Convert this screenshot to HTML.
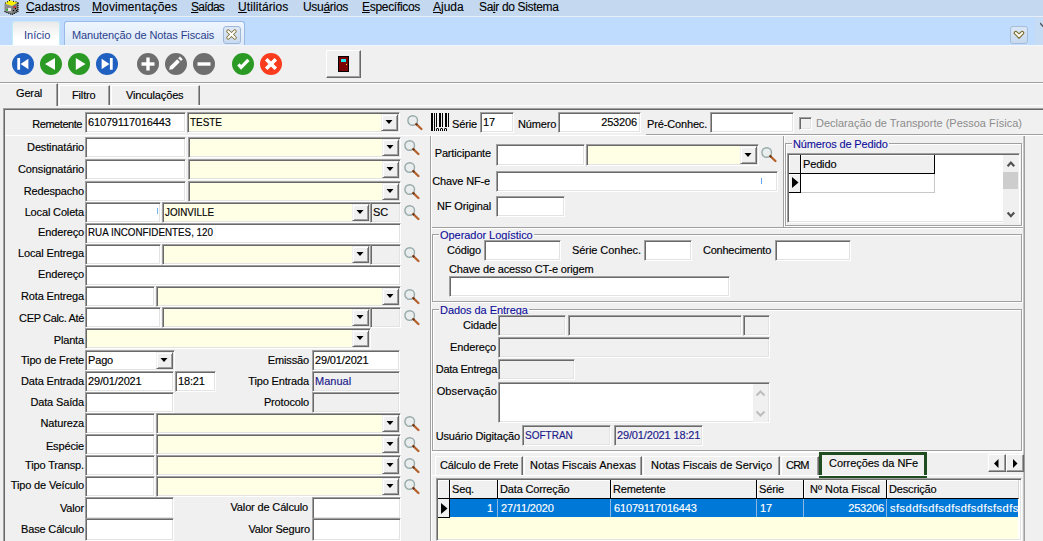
<!DOCTYPE html>
<html><head><meta charset="utf-8"><style>
html,body{margin:0;padding:0;width:1043px;height:541px;overflow:hidden;background:#f0f0f0}
body>div,body>svg{position:absolute}
.t,.m,.tb,.t11,.gt{position:absolute;white-space:nowrap;font-family:"Liberation Sans",sans-serif;color:#000}
.t,.t11{font-size:11px;line-height:13px;letter-spacing:-0.15px;-webkit-text-stroke:0.15px currentColor}
.m{font-size:12px;line-height:14px;color:#000;letter-spacing:0;-webkit-text-stroke:0.1px #000}
.tb{font-size:12px;line-height:14px;letter-spacing:-0.2px}
.gt{font-size:11px;line-height:13px;color:#0e0e9a;background:#f0f0f0;padding:0 1px;letter-spacing:-0.05px;-webkit-text-stroke:0.1px currentColor}
.ed{position:absolute;box-sizing:border-box;border-style:solid;border-width:1px;border-color:#a0a0a0 #fff #fff #a0a0a0;box-shadow:inset 1px 1px 0 #696969,inset -1px -1px 0 #e3e3e3}
.btn{position:absolute;box-sizing:border-box;background:#f0f0f0;border-style:solid;border-width:1px;border-color:#f0f0f0 #696969 #696969 #f0f0f0;box-shadow:inset 1px 1px 0 #fff,inset -1px -1px 0 #a0a0a0}
.tri{position:absolute;width:0;height:0;border-left:4px solid transparent;border-right:4px solid transparent;border-top:4px solid #000}
.grp{position:absolute;box-sizing:border-box;border:1px solid #a0a0a0;box-shadow:1px 1px 0 #fff, inset 1px 1px 0 #fff}
</style></head><body>
<div style="left:0px;top:0px;width:1043px;height:16px;background:#c4d9ef"></div>
<div style="left:0px;top:16px;width:1043px;height:1px;background:#e8eef6"></div>
<svg style="left:3px;top:0px" width="17" height="16" viewBox="0 0 17 16">
<polygon points="1.5,3.5 6.5,0.3 15,2.5 9,6" fill="#f8f000"/>
<polygon points="1.5,3.5 9,6 9,14.5 1.5,11.5" fill="#8c8c8c"/>
<polygon points="9,6 15,2.5 15,11.5 9,14.5" fill="#787878"/>
<rect x="2" y="2.5" width="1" height="1" fill="#000"/><rect x="4" y="1.3" width="1" height="1" fill="#000"/><rect x="6" y="0" width="1" height="1" fill="#000"/><rect x="10" y="0.8" width="1" height="1" fill="#000"/><rect x="12.5" y="1.4" width="1" height="1" fill="#000"/><rect x="14.5" y="2.2" width="1" height="1" fill="#000"/>
<path d="M1.5,11.5 L9,14.5 L15,11.5 L15,3" fill="none" stroke="#000" stroke-width="1.1" stroke-dasharray="1.2,0.8"/>
<rect x="3.5" y="9" width="1.5" height="1.5" fill="#1c1"/><rect x="10.5" y="6.5" width="2.5" height="1.2" fill="#f11"/>
<rect x="5" y="8" width="3" height="3" fill="#e8e8e8"/><rect x="12" y="8" width="1" height="1" fill="#000"/><rect x="10" y="10" width="1" height="1" fill="#000"/><rect x="13" y="10" width="1" height="1" fill="#000"/>
</svg>
<div class="m" style="top:0px;letter-spacing:-0.1px;left:26px;"><u>C</u>adastros</div>
<div class="m" style="top:0px;letter-spacing:0.1px;left:92px;"><u>M</u>ovimentações</div>
<div class="m" style="top:0px;letter-spacing:-0.7px;left:191px;"><u>S</u>aídas</div>
<div class="m" style="top:0px;letter-spacing:0.1px;left:238px;"><u>U</u>tilitários</div>
<div class="m" style="top:0px;letter-spacing:-0.3px;left:303px;">Usu<u>á</u>rios</div>
<div class="m" style="top:0px;letter-spacing:-0.3px;left:362px;"><u>E</u>specíficos</div>
<div class="m" style="top:0px;letter-spacing:0px;left:433px;"><u>A</u>juda</div>
<div class="m" style="top:0px;letter-spacing:-0.35px;left:479px;">Sa<u>i</u>r do Sistema</div>
<div style="left:0px;top:17px;width:1043px;height:28px;background:#bfdbfe"></div>
<div style="left:0px;top:45px;width:1043px;height:1px;background:#f4f8fc"></div>
<div style="left:12px;top:21px;width:48px;height:24px;background:linear-gradient(#eaeaea,#ffffff 70%);border:1px solid #d0e6f4;border-left-color:#bfeefa;border-right-color:#bfeefa;border-bottom:none;border-radius:3px 3px 0 0;box-sizing:border-box"></div>
<div class="tb" style="top:28px;letter-spacing:0px;left:24px;color:#2b3f8e;font-size:11px">Início</div>
<div style="left:64px;top:21px;width:181px;height:24px;background:linear-gradient(#eef5fd,#dde9f8);border:1px solid #98b9e6;border-bottom:none;border-radius:3px 3px 0 0;box-sizing:border-box"></div>
<div class="tb" style="top:28px;letter-spacing:-0.1px;left:72px;color:#2b3f8e;font-size:11px">Manutenção de Notas Fiscais</div>
<div style="left:223px;top:26px;width:18px;height:18px;background:linear-gradient(#dde8f6,#c9daf0);border:1px solid #9fb6d6;border-radius:3px;box-sizing:border-box"></div>
<svg style="left:226px;top:29px" width="11" height="11" viewBox="0 0 11 11"><path d="M2.2,2.2 L8.8,8.8 M8.8,2.2 L2.2,8.8" stroke="#7a6a2a" stroke-width="3.6" stroke-linecap="round"/><path d="M2.2,2.2 L8.8,8.8 M8.8,2.2 L2.2,8.8" stroke="#ffffff" stroke-width="2" stroke-linecap="round"/></svg>
<div style="left:1010px;top:26px;width:18px;height:18px;background:linear-gradient(#dbe7f6,#c7d9f0);border:1px solid #a6bcd9;border-radius:3px;box-sizing:border-box"></div>
<div style="left:1035px;top:17px;width:8px;height:28px;background:#c6dcf4"></div>
<svg style="left:1013px;top:29px" width="12" height="12" viewBox="0 0 12 12"><path d="M1.2,4.3 Q1.2,2.3 3.2,2.3 L6,4.8 L8.8,2.3 Q10.8,2.3 10.8,4.3 L6,9.3 Z" fill="#fffef6" stroke="#7a6a2a" stroke-width="1.1" stroke-linejoin="round"/></svg>
<svg style="left:1040px;top:22px" width="3" height="6" viewBox="0 0 3 6"><path d="M0,1 L2.5,4 L5,1" fill="none" stroke="#555" stroke-width="1.3"/></svg>
<div style="left:0px;top:46px;width:1043px;height:36px;background:#f0f0f0"></div>
<div style="left:0px;top:82px;width:1043px;height:1px;background:#a0a0a0"></div>
<div style="left:0px;top:83px;width:1043px;height:1px;background:#ffffff"></div>
<svg style="left:12px;top:53px" width="22" height="22" viewBox="0 0 22 22"><circle cx="11" cy="11" r="11" fill="#1f60c0"/><rect x="5.3" y="5" width="2.8" height="11.7" fill="#fff"/><polygon points="8.6,11 16.4,5.8 16.4,16.2" fill="#fff"/></svg>
<svg style="left:40px;top:53px" width="22" height="22" viewBox="0 0 22 22"><circle cx="11" cy="11" r="11" fill="#2b9a25"/><polygon points="5,11 15,5 15,17" fill="#fff"/></svg>
<svg style="left:68px;top:53px" width="22" height="22" viewBox="0 0 22 22"><circle cx="11" cy="11" r="11" fill="#2b9a25"/><polygon points="17.5,11 7.8,5 7.8,17" fill="#fff"/></svg>
<svg style="left:96px;top:53px" width="22" height="22" viewBox="0 0 22 22"><circle cx="11" cy="11" r="11" fill="#1f60c0"/><rect x="13.9" y="5" width="2.8" height="11.7" fill="#fff"/><polygon points="13.4,11 5.6,5.8 5.6,16.2" fill="#fff"/></svg>
<svg style="left:137px;top:53px" width="22" height="22" viewBox="0 0 22 22"><circle cx="11" cy="11" r="11" fill="#6e6e6e"/><rect x="4.5" y="9.3" width="13" height="3.4" fill="#fff"/><rect x="9.3" y="4.5" width="3.4" height="13" fill="#fff"/></svg>
<svg style="left:165px;top:53px" width="22" height="22" viewBox="0 0 22 22"><circle cx="11" cy="11" r="11" fill="#6e6e6e"/><path d="M4.2,16.8 L4.9,13.6 L12.2,6.3 L14.9,9 L7.6,16.3 Z" fill="#fff"/><path d="M13.2,5.3 L15,3.6 L17.7,6.3 L16,8 Z" fill="#fff"/></svg>
<svg style="left:193px;top:53px" width="22" height="22" viewBox="0 0 22 22"><circle cx="11" cy="11" r="11" fill="#6e6e6e"/><rect x="4.5" y="9.3" width="13" height="3.4" fill="#fff"/></svg>
<svg style="left:232px;top:53px" width="22" height="22" viewBox="0 0 22 22"><circle cx="11" cy="11" r="11" fill="#2b9a25"/><path d="M6.4,11.4 L9.1,14.3 L16.4,6.9" fill="none" stroke="#fff" stroke-width="3.3"/></svg>
<svg style="left:260px;top:53px" width="22" height="22" viewBox="0 0 22 22"><circle cx="11" cy="11" r="11" fill="#fa3c1e"/><path d="M6.2,6.2 L15.8,15.8 M15.8,6.2 L6.2,15.8" stroke="#fff" stroke-width="3.6"/></svg>
<div style="left:326px;top:50px;width:35px;height:28px;background:#f0f0f0;border-top:1px solid #fff;border-left:1px solid #fff;border-right:1px solid #696969;border-bottom:1px solid #696969;box-shadow:inset -1px -1px 0 #a0a0a0;box-sizing:border-box"></div>
<div style="left:338px;top:56px;width:11px;height:16px;background:#7a0000;border:1px solid #000;box-sizing:border-box"></div>
<div style="left:341px;top:59px;width:5px;height:3px;background:#22e8f0"></div>
<div style="left:346px;top:64px;width:1px;height:1px;background:#ffe000"></div>
<div style="left:0px;top:84px;width:1043px;height:24px;background:#f0f0f0"></div>
<div style="left:0px;top:83px;width:58px;height:23px;background:#f0f0f0;border-top:1px solid #fff;border-right:1px solid #696969;box-shadow:inset -1px 0 0 #a0a0a0;box-sizing:border-box"></div>
<div class="t11" style="top:87px;left:16px;">Geral</div>
<div style="left:59px;top:85px;width:51px;height:21px;background:#f0f0f0;border-top:1px solid #fff;border-left:1px solid #fff;border-right:1px solid #696969;box-shadow:inset -1px 0 0 #a0a0a0;box-sizing:border-box"></div>
<div class="t11" style="top:89px;left:72px;">Filtro</div>
<div style="left:111px;top:85px;width:89px;height:21px;background:#f0f0f0;border-top:1px solid #fff;border-left:1px solid #fff;border-right:1px solid #696969;box-shadow:inset -1px 0 0 #a0a0a0;box-sizing:border-box"></div>
<div class="t11" style="top:89px;left:126px;">Vinculações</div>
<div style="left:58px;top:105px;width:985px;height:1px;background:#fff"></div>
<div style="left:3px;top:108px;width:1040px;height:433px;background:#f0f0f0"></div>
<div style="left:3px;top:108px;width:1040px;height:1px;background:#a0a0a0"></div>
<div style="left:4px;top:109px;width:1039px;height:1px;background:#696969"></div>
<div style="left:3px;top:108px;width:1px;height:433px;background:#a0a0a0"></div>
<div style="left:4px;top:109px;width:1px;height:432px;background:#696969"></div>
<div style="left:646px;top:134px;width:397px;height:1px;background:#a0a0a0"></div>
<div style="left:5px;top:135px;width:1038px;height:1px;background:#ffffff"></div>
<div style="left:430px;top:136px;width:1px;height:405px;background:#a0a0a0"></div>
<div style="left:431px;top:136px;width:1px;height:405px;background:#ffffff"></div>
<div style="left:1023px;top:136px;width:1px;height:405px;background:#c4c4c4"></div>
<div style="left:1024px;top:136px;width:1px;height:405px;background:#a0a0a0"></div>
<div class="t" style="top:118px;letter-spacing:-0.45px;left:-218px;width:300px;text-align:right;">Remetente</div>
<div class="ed" style="left:85px;top:112px;width:101px;height:21px;background:#fff"></div>
<div class="t" style="top:116px;left:88px;">61079117016443</div>
<div class="ed" style="left:187px;top:112px;width:213px;height:21px;background:#ffffe6"></div>
<div class="t" style="top:116px;letter-spacing:0px;left:190px;color:#000;transform:scaleX(0.9);transform-origin:0 0;">TESTE</div>
<div class="btn" style="left:381px;top:114px;width:17px;height:17px"></div>
<svg style="left:385px;top:120px" width="8" height="5" viewBox="0 0 8 5"><polygon points="0.5,0 7.5,0 4,4" fill="#000"/></svg>
<svg style="left:407px;top:115px" width="16" height="16" viewBox="0 0 16 16"><circle cx="5.7" cy="5.5" r="4.8" fill="#e9eded" stroke="#97a9a9" stroke-width="1.4"/><line x1="9.2" y1="9.0" x2="14.4" y2="14.0" stroke="#b4602a" stroke-width="2.3" stroke-linecap="round"/><line x1="9.0" y1="8.8" x2="10.2" y2="10.0" stroke="#5a3520" stroke-width="2.3"/></svg>
<svg style="left:431px;top:113px" width="19" height="18" viewBox="0 0 19 18"><g fill="#000"><rect x="0" y="0" width="2" height="18"/><rect x="3" y="0" width="1" height="18"/><rect x="5" y="0" width="1" height="14"/><rect x="8" y="0" width="2" height="14"/><rect x="11" y="0" width="1" height="14"/><rect x="14" y="0" width="2" height="14"/><rect x="17" y="0" width="1" height="14"/><rect x="5.5" y="15" width="2" height="1"/><rect x="5" y="16" width="1" height="2"/><rect x="7" y="16" width="1" height="2"/><rect x="9.5" y="15" width="2" height="1"/><rect x="9" y="16" width="1" height="2"/><rect x="11" y="16" width="1" height="2"/><rect x="13.5" y="15" width="2" height="1"/><rect x="13" y="16" width="1" height="2"/><rect x="15" y="16" width="1" height="2"/></g></svg>
<div class="t" style="top:118px;left:452px;">Série</div>
<div class="ed" style="left:480px;top:112px;width:34px;height:21px;background:#fff"></div>
<div class="t" style="top:116px;left:483px;">17</div>
<div class="t" style="top:118px;left:518px;">Número</div>
<div class="ed" style="left:558px;top:112px;width:83px;height:21px;background:#fff"></div>
<div class="t" style="top:116px;left:337px;width:300px;text-align:right;">253206</div>
<div class="t" style="top:118px;left:647px;">Pré-Conhec.</div>
<div class="ed" style="left:710px;top:112px;width:84px;height:21px;background:#fff"></div>
<div class="ed" style="left:799px;top:117px;width:13px;height:13px;background:#f0f0f0"></div>
<div class="t" style="top:117px;left:816px;color:#8c8c8c;letter-spacing:0;-webkit-text-stroke:0">Declaração de Transporte (Pessoa Física)</div>
<div class="t" style="top:141px;left:-216px;width:300px;text-align:right;">Destinatário</div>
<div class="ed" style="left:85px;top:137px;width:101px;height:21px;background:#fff"></div>
<div class="ed" style="left:188px;top:137px;width:213px;height:21px;background:#ffffe6"></div>
<div class="btn" style="left:382px;top:139px;width:17px;height:17px"></div>
<svg style="left:386px;top:145px" width="8" height="5" viewBox="0 0 8 5"><polygon points="0.5,0 7.5,0 4,4" fill="#000"/></svg>
<svg style="left:404px;top:140px" width="16" height="16" viewBox="0 0 16 16"><circle cx="5.7" cy="5.5" r="4.8" fill="#e9eded" stroke="#97a9a9" stroke-width="1.4"/><line x1="9.2" y1="9.0" x2="14.4" y2="14.0" stroke="#b4602a" stroke-width="2.3" stroke-linecap="round"/><line x1="9.0" y1="8.8" x2="10.2" y2="10.0" stroke="#5a3520" stroke-width="2.3"/></svg>
<div class="t" style="top:163px;left:-216px;width:300px;text-align:right;">Consignatário</div>
<div class="ed" style="left:85px;top:159px;width:101px;height:21px;background:#fff"></div>
<div class="ed" style="left:188px;top:159px;width:213px;height:21px;background:#ffffe6"></div>
<div class="btn" style="left:382px;top:161px;width:17px;height:17px"></div>
<svg style="left:386px;top:167px" width="8" height="5" viewBox="0 0 8 5"><polygon points="0.5,0 7.5,0 4,4" fill="#000"/></svg>
<svg style="left:404px;top:162px" width="16" height="16" viewBox="0 0 16 16"><circle cx="5.7" cy="5.5" r="4.8" fill="#e9eded" stroke="#97a9a9" stroke-width="1.4"/><line x1="9.2" y1="9.0" x2="14.4" y2="14.0" stroke="#b4602a" stroke-width="2.3" stroke-linecap="round"/><line x1="9.0" y1="8.8" x2="10.2" y2="10.0" stroke="#5a3520" stroke-width="2.3"/></svg>
<div class="t" style="top:185px;left:-216px;width:300px;text-align:right;">Redespacho</div>
<div class="ed" style="left:85px;top:181px;width:101px;height:21px;background:#fff"></div>
<div class="ed" style="left:188px;top:181px;width:213px;height:21px;background:#ffffe6"></div>
<div class="btn" style="left:382px;top:183px;width:17px;height:17px"></div>
<svg style="left:386px;top:189px" width="8" height="5" viewBox="0 0 8 5"><polygon points="0.5,0 7.5,0 4,4" fill="#000"/></svg>
<svg style="left:404px;top:184px" width="16" height="16" viewBox="0 0 16 16"><circle cx="5.7" cy="5.5" r="4.8" fill="#e9eded" stroke="#97a9a9" stroke-width="1.4"/><line x1="9.2" y1="9.0" x2="14.4" y2="14.0" stroke="#b4602a" stroke-width="2.3" stroke-linecap="round"/><line x1="9.0" y1="8.8" x2="10.2" y2="10.0" stroke="#5a3520" stroke-width="2.3"/></svg>
<div class="t" style="top:206px;left:-216px;width:300px;text-align:right;">Local Coleta</div>
<div class="ed" style="left:85px;top:202px;width:76px;height:21px;background:#fff"></div>
<div style="left:157px;top:208px;width:1px;height:6px;background:#70b4f4"></div>
<div class="ed" style="left:162px;top:202px;width:209px;height:21px;background:#ffffe6"></div>
<div class="t" style="top:206px;letter-spacing:0px;left:165px;transform:scaleX(0.89);transform-origin:0 0;">JOINVILLE</div>
<div class="btn" style="left:352px;top:204px;width:17px;height:17px"></div>
<svg style="left:356px;top:210px" width="8" height="5" viewBox="0 0 8 5"><polygon points="0.5,0 7.5,0 4,4" fill="#000"/></svg>
<div class="ed" style="left:370px;top:202px;width:31px;height:21px;background:#f0f0f0"></div>
<div class="t" style="top:206px;left:373px;">SC</div>
<svg style="left:404px;top:205px" width="16" height="16" viewBox="0 0 16 16"><circle cx="5.7" cy="5.5" r="4.8" fill="#e9eded" stroke="#97a9a9" stroke-width="1.4"/><line x1="9.2" y1="9.0" x2="14.4" y2="14.0" stroke="#b4602a" stroke-width="2.3" stroke-linecap="round"/><line x1="9.0" y1="8.8" x2="10.2" y2="10.0" stroke="#5a3520" stroke-width="2.3"/></svg>
<div class="t" style="top:226px;left:-216px;width:300px;text-align:right;">Endereço</div>
<div class="ed" style="left:85px;top:223px;width:316px;height:21px;background:#fff"></div>
<div class="t" style="top:226px;letter-spacing:0px;left:88px;transform:scaleX(0.893);transform-origin:0 0;">RUA INCONFIDENTES, 120</div>
<div class="t" style="top:247px;left:-216px;width:300px;text-align:right;">Local Entrega</div>
<div class="ed" style="left:85px;top:244px;width:76px;height:21px;background:#fff"></div>
<div class="ed" style="left:162px;top:244px;width:209px;height:21px;background:#ffffe6"></div>
<div class="btn" style="left:352px;top:246px;width:17px;height:17px"></div>
<svg style="left:356px;top:252px" width="8" height="5" viewBox="0 0 8 5"><polygon points="0.5,0 7.5,0 4,4" fill="#000"/></svg>
<div class="ed" style="left:370px;top:244px;width:31px;height:21px;background:#f0f0f0"></div>
<svg style="left:404px;top:247px" width="16" height="16" viewBox="0 0 16 16"><circle cx="5.7" cy="5.5" r="4.8" fill="#e9eded" stroke="#97a9a9" stroke-width="1.4"/><line x1="9.2" y1="9.0" x2="14.4" y2="14.0" stroke="#b4602a" stroke-width="2.3" stroke-linecap="round"/><line x1="9.0" y1="8.8" x2="10.2" y2="10.0" stroke="#5a3520" stroke-width="2.3"/></svg>
<div class="t" style="top:268px;left:-216px;width:300px;text-align:right;">Endereço</div>
<div class="ed" style="left:85px;top:265px;width:316px;height:21px;background:#fff"></div>
<div class="t" style="top:290px;left:-216px;width:300px;text-align:right;">Rota Entrega</div>
<div class="ed" style="left:85px;top:286px;width:70px;height:21px;background:#fff"></div>
<div class="ed" style="left:156px;top:286px;width:245px;height:21px;background:#ffffe6"></div>
<div class="btn" style="left:382px;top:288px;width:17px;height:17px"></div>
<svg style="left:386px;top:294px" width="8" height="5" viewBox="0 0 8 5"><polygon points="0.5,0 7.5,0 4,4" fill="#000"/></svg>
<svg style="left:404px;top:289px" width="16" height="16" viewBox="0 0 16 16"><circle cx="5.7" cy="5.5" r="4.8" fill="#e9eded" stroke="#97a9a9" stroke-width="1.4"/><line x1="9.2" y1="9.0" x2="14.4" y2="14.0" stroke="#b4602a" stroke-width="2.3" stroke-linecap="round"/><line x1="9.0" y1="8.8" x2="10.2" y2="10.0" stroke="#5a3520" stroke-width="2.3"/></svg>
<div class="t" style="top:312px;letter-spacing:-0.35px;left:-216px;width:300px;text-align:right;">CEP Calc. Até</div>
<div class="ed" style="left:85px;top:307px;width:76px;height:21px;background:#fff"></div>
<div class="ed" style="left:162px;top:307px;width:209px;height:21px;background:#ffffe6"></div>
<div class="btn" style="left:352px;top:309px;width:17px;height:17px"></div>
<svg style="left:356px;top:315px" width="8" height="5" viewBox="0 0 8 5"><polygon points="0.5,0 7.5,0 4,4" fill="#000"/></svg>
<div class="ed" style="left:370px;top:307px;width:31px;height:21px;background:#f0f0f0"></div>
<svg style="left:404px;top:310px" width="16" height="16" viewBox="0 0 16 16"><circle cx="5.7" cy="5.5" r="4.8" fill="#e9eded" stroke="#97a9a9" stroke-width="1.4"/><line x1="9.2" y1="9.0" x2="14.4" y2="14.0" stroke="#b4602a" stroke-width="2.3" stroke-linecap="round"/><line x1="9.0" y1="8.8" x2="10.2" y2="10.0" stroke="#5a3520" stroke-width="2.3"/></svg>
<div class="t" style="top:334px;left:-216px;width:300px;text-align:right;">Planta</div>
<div class="ed" style="left:85px;top:328px;width:286px;height:21px;background:#ffffe6"></div>
<div class="btn" style="left:352px;top:330px;width:17px;height:17px"></div>
<svg style="left:356px;top:336px" width="8" height="5" viewBox="0 0 8 5"><polygon points="0.5,0 7.5,0 4,4" fill="#000"/></svg>
<div class="t" style="top:354px;left:-216px;width:300px;text-align:right;">Tipo de Frete</div>
<div class="ed" style="left:85px;top:350px;width:90px;height:21px;background:#fff"></div>
<div class="t" style="top:354px;left:88px;">Pago</div>
<div class="btn" style="left:156px;top:352px;width:17px;height:17px"></div>
<svg style="left:160px;top:358px" width="8" height="5" viewBox="0 0 8 5"><polygon points="0.5,0 7.5,0 4,4" fill="#000"/></svg>
<div class="t" style="top:375px;left:-216px;width:300px;text-align:right;">Data Entrada</div>
<div class="ed" style="left:85px;top:371px;width:89px;height:21px;background:#fff"></div>
<div class="t" style="top:375px;left:88px;">29/01/2021</div>
<div class="ed" style="left:175px;top:371px;width:41px;height:21px;background:#fff"></div>
<div class="t" style="top:375px;left:178px;">18:21</div>
<div class="t" style="top:396px;left:-216px;width:300px;text-align:right;">Data Saída</div>
<div class="ed" style="left:85px;top:392px;width:89px;height:21px;background:#fff"></div>
<div class="t" style="top:354px;left:9px;width:300px;text-align:right;">Emissão</div>
<div class="ed" style="left:312px;top:350px;width:88px;height:21px;background:#fff"></div>
<div class="t" style="top:354px;left:315px;">29/01/2021</div>
<div class="t" style="top:375px;left:9px;width:300px;text-align:right;">Tipo Entrada</div>
<div class="ed" style="left:312px;top:371px;width:88px;height:21px;background:#f0f0f0"></div>
<div class="t" style="top:375px;letter-spacing:0px;left:315px;color:#1a1a8a;">Manual</div>
<div class="t" style="top:396px;left:9px;width:300px;text-align:right;">Protocolo</div>
<div class="ed" style="left:312px;top:392px;width:88px;height:21px;background:#f0f0f0"></div>
<div class="t" style="top:417px;left:-216px;width:300px;text-align:right;">Natureza</div>
<div class="ed" style="left:85px;top:413px;width:70px;height:21px;background:#fff"></div>
<div class="ed" style="left:156px;top:413px;width:245px;height:21px;background:#ffffe6"></div>
<div class="btn" style="left:382px;top:415px;width:17px;height:17px"></div>
<svg style="left:386px;top:421px" width="8" height="5" viewBox="0 0 8 5"><polygon points="0.5,0 7.5,0 4,4" fill="#000"/></svg>
<svg style="left:404px;top:416px" width="16" height="16" viewBox="0 0 16 16"><circle cx="5.7" cy="5.5" r="4.8" fill="#e9eded" stroke="#97a9a9" stroke-width="1.4"/><line x1="9.2" y1="9.0" x2="14.4" y2="14.0" stroke="#b4602a" stroke-width="2.3" stroke-linecap="round"/><line x1="9.0" y1="8.8" x2="10.2" y2="10.0" stroke="#5a3520" stroke-width="2.3"/></svg>
<div class="t" style="top:440px;left:-216px;width:300px;text-align:right;">Espécie</div>
<div class="ed" style="left:85px;top:434px;width:70px;height:21px;background:#fff"></div>
<div class="ed" style="left:156px;top:434px;width:245px;height:21px;background:#ffffe6"></div>
<div class="btn" style="left:382px;top:436px;width:17px;height:17px"></div>
<svg style="left:386px;top:442px" width="8" height="5" viewBox="0 0 8 5"><polygon points="0.5,0 7.5,0 4,4" fill="#000"/></svg>
<svg style="left:404px;top:437px" width="16" height="16" viewBox="0 0 16 16"><circle cx="5.7" cy="5.5" r="4.8" fill="#e9eded" stroke="#97a9a9" stroke-width="1.4"/><line x1="9.2" y1="9.0" x2="14.4" y2="14.0" stroke="#b4602a" stroke-width="2.3" stroke-linecap="round"/><line x1="9.0" y1="8.8" x2="10.2" y2="10.0" stroke="#5a3520" stroke-width="2.3"/></svg>
<div class="t" style="top:459px;left:-216px;width:300px;text-align:right;">Tipo Transp.</div>
<div class="ed" style="left:85px;top:455px;width:70px;height:21px;background:#fff"></div>
<div class="ed" style="left:156px;top:455px;width:245px;height:21px;background:#ffffe6"></div>
<div class="btn" style="left:382px;top:457px;width:17px;height:17px"></div>
<svg style="left:386px;top:463px" width="8" height="5" viewBox="0 0 8 5"><polygon points="0.5,0 7.5,0 4,4" fill="#000"/></svg>
<svg style="left:404px;top:458px" width="16" height="16" viewBox="0 0 16 16"><circle cx="5.7" cy="5.5" r="4.8" fill="#e9eded" stroke="#97a9a9" stroke-width="1.4"/><line x1="9.2" y1="9.0" x2="14.4" y2="14.0" stroke="#b4602a" stroke-width="2.3" stroke-linecap="round"/><line x1="9.0" y1="8.8" x2="10.2" y2="10.0" stroke="#5a3520" stroke-width="2.3"/></svg>
<div class="t" style="top:479px;left:-216px;width:300px;text-align:right;">Tipo de Veículo</div>
<div class="ed" style="left:85px;top:476px;width:70px;height:21px;background:#fff"></div>
<div class="ed" style="left:156px;top:476px;width:245px;height:21px;background:#ffffe6"></div>
<div class="btn" style="left:382px;top:478px;width:17px;height:17px"></div>
<svg style="left:386px;top:484px" width="8" height="5" viewBox="0 0 8 5"><polygon points="0.5,0 7.5,0 4,4" fill="#000"/></svg>
<svg style="left:404px;top:479px" width="16" height="16" viewBox="0 0 16 16"><circle cx="5.7" cy="5.5" r="4.8" fill="#e9eded" stroke="#97a9a9" stroke-width="1.4"/><line x1="9.2" y1="9.0" x2="14.4" y2="14.0" stroke="#b4602a" stroke-width="2.3" stroke-linecap="round"/><line x1="9.0" y1="8.8" x2="10.2" y2="10.0" stroke="#5a3520" stroke-width="2.3"/></svg>
<div class="t" style="top:502px;left:-216px;width:300px;text-align:right;">Valor</div>
<div class="ed" style="left:85px;top:497px;width:89px;height:22px;background:#fff"></div>
<div class="t" style="top:523px;left:-216px;width:300px;text-align:right;">Base Cálculo</div>
<div class="ed" style="left:85px;top:518px;width:89px;height:23px;background:#fff"></div>
<div class="t" style="top:501px;left:8px;width:300px;text-align:right;">Valor de Cálculo</div>
<div class="ed" style="left:312px;top:497px;width:89px;height:22px;background:#fff"></div>
<div class="t" style="top:523px;left:10px;width:300px;text-align:right;">Valor Seguro</div>
<div class="ed" style="left:312px;top:518px;width:89px;height:23px;background:#fff"></div>
<div class="t" style="top:147px;left:191px;width:300px;text-align:right;">Participante</div>
<div class="ed" style="left:496px;top:144px;width:89px;height:22px;background:#fff"></div>
<div class="ed" style="left:586px;top:144px;width:173px;height:22px;background:#ffffe6"></div>
<div class="btn" style="left:740px;top:146px;width:17px;height:18px"></div>
<svg style="left:744px;top:153px" width="8" height="5" viewBox="0 0 8 5"><polygon points="0.5,0 7.5,0 4,4" fill="#000"/></svg>
<svg style="left:761px;top:147px" width="16" height="16" viewBox="0 0 16 16"><circle cx="5.7" cy="5.5" r="4.8" fill="#e9eded" stroke="#97a9a9" stroke-width="1.4"/><line x1="9.2" y1="9.0" x2="14.4" y2="14.0" stroke="#b4602a" stroke-width="2.3" stroke-linecap="round"/><line x1="9.0" y1="8.8" x2="10.2" y2="10.0" stroke="#5a3520" stroke-width="2.3"/></svg>
<div class="t" style="top:175px;left:190px;width:300px;text-align:right;">Chave NF-e</div>
<div class="ed" style="left:496px;top:171px;width:282px;height:21px;background:#fff"></div>
<div style="left:761px;top:178px;width:1px;height:6px;background:#5aa4ee"></div>
<div style="left:783px;top:136px;width:1px;height:91px;background:#a0a0a0"></div>
<div style="left:784px;top:136px;width:1px;height:91px;background:#fff"></div>
<div class="t" style="top:200px;left:191px;width:300px;text-align:right;">NF Original</div>
<div class="ed" style="left:496px;top:196px;width:69px;height:21px;background:#fff"></div>
<div style="left:432px;top:227px;width:591px;height:1px;background:#a0a0a0"></div>
<div style="left:432px;top:228px;width:591px;height:1px;background:#fff"></div>
<div class="grp" style="left:785px;top:143px;width:237px;height:83px"></div>
<div class="gt" style="left:792px;top:138px;letter-spacing:-0.15px">Números de Pedido</div>
<div class="ed" style="left:787px;top:153px;width:233px;height:70px;background:#fff"></div>
<div style="left:789px;top:155px;width:11px;height:18px;background:#f0f0f0;border-right:1px solid #000;border-bottom:1px solid #000;box-sizing:content-box;box-shadow:inset 1px 1px 0 #fff"></div>
<div style="left:801px;top:155px;width:133px;height:18px;background:#f0f0f0;border-right:1px solid #000;border-bottom:1px solid #000;box-sizing:content-box;box-shadow:inset 1px 1px 0 #fff"></div>
<div class="t" style="top:158px;left:803px;">Pedido</div>
<div style="left:789px;top:174px;width:11px;height:18px;background:#f0f0f0;border-right:1px solid #000;border-bottom:1px solid #000;box-sizing:content-box;box-shadow:inset 1px 1px 0 #fff"></div>
<svg style="left:792px;top:177px" width="7" height="11" viewBox="0 0 7 11"><polygon points="0,0 6.5,5.5 0,11" fill="#000"/></svg>
<div style="left:801px;top:174px;width:133px;height:18px;background:#fff;border-right:1px solid #c8c8c8;border-bottom:1px solid #c8c8c8;box-sizing:content-box"></div>
<div style="left:1003px;top:155px;width:16px;height:68px;background:#f0f0f0"></div>
<div style="left:1003px;top:172px;width:15px;height:17px;background:#cdcdcd"></div>
<svg style="left:1006px;top:160px" width="10" height="8" viewBox="0 0 10 8"><path d="M1.6,6.3 L4.9,2.6 L8.2,6.3" fill="none" stroke="#505050" stroke-width="2.2"/></svg>
<svg style="left:1006px;top:211px" width="10" height="8" viewBox="0 0 10 8"><path d="M1.6,1.5 L4.9,5.2 L8.2,1.5" fill="none" stroke="#505050" stroke-width="2.2"/></svg>
<div class="grp" style="left:432px;top:234px;width:590px;height:68px"></div>
<div class="gt" style="left:439px;top:229px;letter-spacing:-0.05px">Operador Logístico</div>
<div class="t" style="top:244px;left:181px;width:300px;text-align:right;">Código</div>
<div class="ed" style="left:484px;top:240px;width:77px;height:21px;background:#fff"></div>
<div class="t" style="top:244px;letter-spacing:-0.05px;left:341px;width:300px;text-align:right;">Série Conhec.</div>
<div class="ed" style="left:644px;top:240px;width:48px;height:21px;background:#fff"></div>
<div class="t" style="top:244px;letter-spacing:-0.25px;left:471px;width:300px;text-align:right;">Conhecimento</div>
<div class="ed" style="left:775px;top:240px;width:76px;height:21px;background:#fff"></div>
<div class="t" style="top:263px;left:449px;">Chave de acesso CT-e origem</div>
<div class="ed" style="left:449px;top:276px;width:281px;height:21px;background:#fff"></div>
<div class="grp" style="left:432px;top:309px;width:590px;height:142px"></div>
<div class="gt" style="left:439px;top:304px;letter-spacing:-0.05px">Dados da Entrega</div>
<div class="t" style="top:319px;left:197px;width:300px;text-align:right;">Cidade</div>
<div class="ed" style="left:498px;top:315px;width:68px;height:21px;background:#f0f0f0"></div>
<div class="ed" style="left:568px;top:315px;width:174px;height:21px;background:#f0f0f0"></div>
<div class="ed" style="left:743px;top:315px;width:27px;height:21px;background:#f0f0f0"></div>
<div class="t" style="top:341px;left:196px;width:300px;text-align:right;">Endereço</div>
<div class="ed" style="left:498px;top:337px;width:272px;height:21px;background:#f0f0f0"></div>
<div class="t" style="top:363px;letter-spacing:-0.3px;left:197px;width:300px;text-align:right;">Data Entrega</div>
<div class="ed" style="left:498px;top:359px;width:77px;height:21px;background:#f0f0f0"></div>
<div class="t" style="top:385px;letter-spacing:0.1px;left:197px;width:300px;text-align:right;">Observação</div>
<div class="ed" style="left:498px;top:382px;width:272px;height:41px;background:#fff"></div>
<div style="left:753px;top:384px;width:15px;height:38px;background:#f0f0f0"></div>
<svg style="left:755px;top:389px" width="11" height="8" viewBox="0 0 11 8"><path d="M1.5,6.5 L5.5,2.5 L9.5,6.5" fill="none" stroke="#bdbdbd" stroke-width="2"/></svg>
<svg style="left:755px;top:410px" width="11" height="8" viewBox="0 0 11 8"><path d="M1.5,1.5 L5.5,5.5 L9.5,1.5" fill="none" stroke="#bdbdbd" stroke-width="2"/></svg>
<div class="t" style="top:430px;left:220px;width:300px;text-align:right;">Usuário Digitação</div>
<div class="ed" style="left:522px;top:425px;width:89px;height:21px;background:#f0f0f0"></div>
<div class="t" style="top:429px;letter-spacing:0px;left:525px;color:#1a1a8a;transform:scaleX(0.91);transform-origin:0 0;">SOFTRAN</div>
<div class="ed" style="left:614px;top:425px;width:89px;height:21px;background:#f0f0f0"></div>
<div class="t" style="top:429px;left:617px;color:#1a1a8a;">29/01/2021 18:21</div>
<div style="left:432px;top:452px;width:591px;height:1px;background:#fff"></div>
<div style="left:435px;top:456px;width:88px;height:19px;background:#f0f0f0;border-top:1px solid #fff;border-left:1px solid #fff;border-right:1px solid #696969;box-shadow:inset -1px 0 0 #a0a0a0;box-sizing:border-box"></div>
<div class="t" style="top:459px;letter-spacing:-0.15px;left:440px;">Cálculo de Frete</div>
<div style="left:524px;top:456px;width:118px;height:19px;background:#f0f0f0;border-top:1px solid #fff;border-left:1px solid #fff;border-right:1px solid #696969;box-shadow:inset -1px 0 0 #a0a0a0;box-sizing:border-box"></div>
<div class="t" style="top:459px;letter-spacing:0.05px;left:530px;">Notas Fiscais Anexas</div>
<div style="left:643px;top:456px;width:137px;height:19px;background:#f0f0f0;border-top:1px solid #fff;border-left:1px solid #fff;border-right:1px solid #696969;box-shadow:inset -1px 0 0 #a0a0a0;box-sizing:border-box"></div>
<div class="t" style="top:459px;letter-spacing:0px;left:651px;">Notas Fiscais de Serviço</div>
<div style="left:781px;top:456px;width:38px;height:19px;background:#f0f0f0;border-top:1px solid #fff;border-left:1px solid #fff;border-right:1px solid #696969;box-shadow:inset -1px 0 0 #a0a0a0;box-sizing:border-box"></div>
<div class="t" style="top:459px;letter-spacing:-0.8px;left:786px;">CRM</div>
<div style="left:819px;top:452px;width:108px;height:27px;background:#f0f0f0;border:3px solid #1f4d1f;box-sizing:border-box"></div>
<div class="t" style="top:457px;letter-spacing:-0.05px;left:829px;">Correções da NFe</div>
<div style="left:988px;top:454px;width:18px;height:18px;background:#f0f0f0;border-top:1px solid #fff;border-left:1px solid #fff;border-right:1px solid #696969;border-bottom:1px solid #696969;box-shadow:inset -1px -1px 0 #a0a0a0;box-sizing:border-box"></div>
<svg style="left:994px;top:459px" width="5" height="9" viewBox="0 0 5 9"><polygon points="4.5,0 0,4.5 4.5,9" fill="#000"/></svg>
<div style="left:1006px;top:454px;width:18px;height:18px;background:#f0f0f0;border-top:1px solid #fff;border-left:1px solid #fff;border-right:1px solid #696969;border-bottom:1px solid #696969;box-shadow:inset -1px -1px 0 #a0a0a0;box-sizing:border-box"></div>
<svg style="left:1013px;top:459px" width="5" height="9" viewBox="0 0 5 9"><polygon points="0,0 4.5,4.5 0,9" fill="#000"/></svg>
<div style="left:432px;top:475px;width:591px;height:1px;background:#fff"></div>
<div class="ed" style="left:436px;top:478px;width:586px;height:63px;background:#ffffe1"></div>
<div style="left:1018px;top:480px;width:2px;height:59px;background:#fff"></div>
<div style="left:438px;top:480px;width:11px;height:18px;background:#f0f0f0;border-right:1px solid #000;border-bottom:1px solid #000;box-sizing:content-box;box-shadow:inset 1px 1px 0 #fff"></div>
<div style="left:450px;top:480px;width:47px;height:18px;background:#f0f0f0;border-right:1px solid #000;border-bottom:1px solid #000;box-sizing:content-box;box-shadow:inset 1px 1px 0 #fff"></div>
<div class="t" style="top:483px;left:452px;">Seq.</div>
<div style="left:498px;top:480px;width:112px;height:18px;background:#f0f0f0;border-right:1px solid #000;border-bottom:1px solid #000;box-sizing:content-box;box-shadow:inset 1px 1px 0 #fff"></div>
<div class="t" style="top:483px;left:500px;">Data Correção</div>
<div style="left:611px;top:480px;width:145px;height:18px;background:#f0f0f0;border-right:1px solid #000;border-bottom:1px solid #000;box-sizing:content-box;box-shadow:inset 1px 1px 0 #fff"></div>
<div class="t" style="top:483px;left:613px;">Remetente</div>
<div style="left:757px;top:480px;width:46px;height:18px;background:#f0f0f0;border-right:1px solid #000;border-bottom:1px solid #000;box-sizing:content-box;box-shadow:inset 1px 1px 0 #fff"></div>
<div class="t" style="top:483px;left:759px;">Série</div>
<div style="left:804px;top:480px;width:82px;height:18px;background:#f0f0f0;border-right:1px solid #000;border-bottom:1px solid #000;box-sizing:content-box;box-shadow:inset 1px 1px 0 #fff"></div>
<div class="t" style="top:483px;letter-spacing:0px;left:810px;">Nº Nota Fiscal</div>
<div style="left:887px;top:480px;width:131px;height:18px;background:#f0f0f0;border-right:1px solid #d4d4d4;border-bottom:1px solid #000;box-sizing:content-box;box-shadow:inset 1px 1px 0 #fff"></div>
<div class="t" style="top:483px;left:889px;">Descrição</div>
<div style="left:438px;top:499px;width:11px;height:18px;background:#f0f0f0;border-right:1px solid #000;border-bottom:1px solid #000;box-sizing:content-box"></div>
<svg style="left:441px;top:503px" width="7" height="11" viewBox="0 0 7 11"><polygon points="0,0 6.5,5.5 0,11" fill="#000"/></svg>
<div style="left:450px;top:499px;width:568px;height:18px;background:#0078d7"></div>
<div style="left:497px;top:499px;width:1px;height:18px;background:#8ab8e6"></div>
<div style="left:610px;top:499px;width:1px;height:18px;background:#8ab8e6"></div>
<div style="left:756px;top:499px;width:1px;height:18px;background:#8ab8e6"></div>
<div style="left:803px;top:499px;width:1px;height:18px;background:#8ab8e6"></div>
<div style="left:886px;top:499px;width:1px;height:18px;background:#8ab8e6"></div>
<div class="t" style="top:502px;left:193px;width:300px;text-align:right;color:#fff;">1</div>
<div class="t" style="top:502px;left:501px;color:#fff;">27/11/2020</div>
<div class="t" style="top:502px;left:614px;color:#fff;">61079117016443</div>
<div class="t" style="top:502px;left:760px;color:#fff;">17</div>
<div class="t" style="top:502px;left:584px;width:300px;text-align:right;color:#fff;">253206</div>
<div class="t" style="left:890px;top:502px;width:128px;overflow:hidden;color:#fff;letter-spacing:0.5px">sfsddfsdfsdfsdfsdfsfsdfs</div>
</body></html>
